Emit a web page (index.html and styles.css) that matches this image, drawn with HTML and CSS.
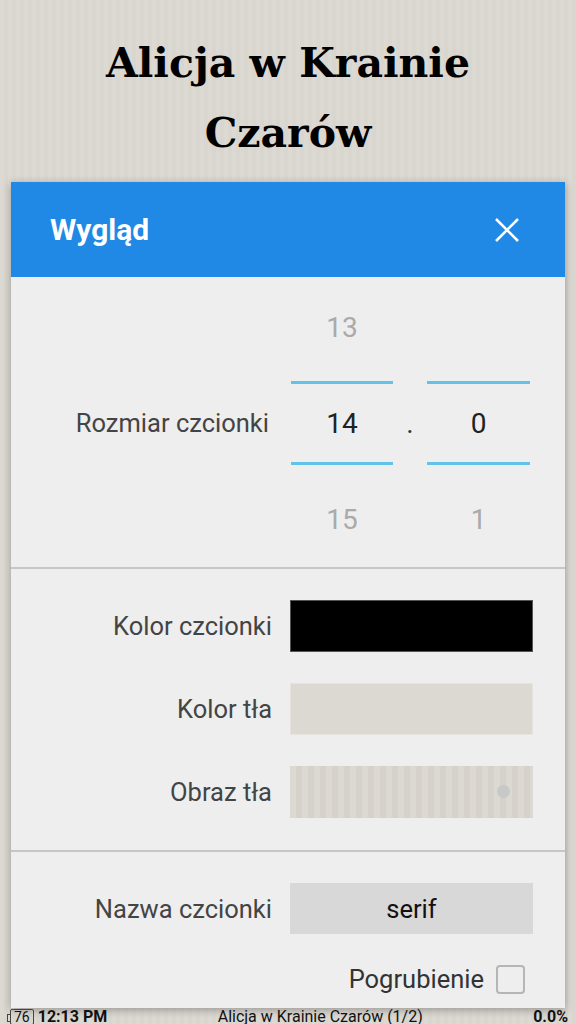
FILE: index.html
```html
<!DOCTYPE html>
<html lang="pl">
<head>
  <meta charset="UTF-8" />
  <title>Alicja w Krainie Czarów</title>
  <link rel="stylesheet" href="styles.css">
</head>
<body>

  <h1 class="book-title">Alicja w Krainie<br>Czarów</h1>

  <!-- Appearance dialog -->
  <div class="dialog">
    <div class="dialog-header">
      <span class="dialog-title">Wygląd</span>
      <button class="close-btn" aria-label="Zamknij">
        <svg width="24" height="24" viewBox="0 0 24 24">
          <path d="M1 1 L23 23 M23 1 L1 23" stroke="#fff" stroke-width="2.6" fill="none" />
        </svg>
      </button>
    </div>

    <section class="size-section">
      <div class="picker-cell dim" style="grid-area: 1 / 2">13</div>
      <div class="size-label">Rozmiar czcionki</div>
      <div class="picker-cell current">14</div>
      <div class="picker-dot">.</div>
      <div class="picker-cell current">0</div>
      <div class="picker-cell dim" style="grid-area: 3 / 2">15</div>
      <div class="picker-cell dim" style="grid-area: 3 / 4">1</div>
    </section>

    <section class="color-section">
      <div class="row">
        <label>Kolor czcionki</label>
        <div class="swatch swatch-black"></div>
      </div>
      <div class="row">
        <label>Kolor tła</label>
        <div class="swatch swatch-paper"></div>
      </div>
      <div class="row">
        <label>Obraz tła</label>
        <div class="swatch swatch-texture"><span class="texture-dot"></span></div>
      </div>
    </section>

    <section class="font-section">
      <div class="row">
        <label>Nazwa czcionki</label>
        <button class="font-btn">serif</button>
      </div>
      <div class="bold-row">
        <span>Pogrubienie</span>
        <span class="checkbox"></span>
      </div>
    </section>
  </div>

  <footer class="status-bar">
    <span class="battery">76</span>
    <span class="time">12:13 PM</span>
    <span class="chapter">Alicja w Krainie Czarów (1/2)</span>
    <span class="progress">0.0%</span>
  </footer>

</body>
</html>
```

FILE: styles.css
```css
body {
  margin: 0;
  height: 1024px;
  overflow: hidden;
  font-family: Roboto, "Noto Sans", sans-serif;
  background: #dcd8d2;
  background-image: repeating-linear-gradient(90deg, #dcd8d2 0 4px, #d9d5cf 4px 8px);
}
.book-title {
  margin: 0;
  padding-top: 28px;
  height: 182px;
  box-sizing: border-box;
  text-align: center;
  font-family: "DejaVu Serif", serif;
  font-weight: bold;
  font-size: 41px;
  line-height: 70px;
  color: #000;
}
.dialog {
  margin-left: 11px;
  width: 554px;
  background: #eeeeee;
  box-shadow: 0 2px 8px rgba(0, 0, 0, 0.3);
}
.dialog-header {
  height: 95px;
  background: #1f89e5;
  display: flex;
  align-items: center;
  justify-content: space-between;
  padding: 0 34px 0 39px;
}
.dialog-title {
  color: #fff;
  font-weight: bold;
  font-size: 30px;
}
.close-btn {
  width: 48px;
  height: 48px;
  border: 0;
  background: none;
  padding: 0;
  display: flex;
  align-items: center;
  justify-content: center;
}
.size-section {
  display: grid;
  grid-template-columns: 280px 102px 34px 103px;
  grid-template-rows: 96px 96px 96px;
  padding-top: 2px;
  border-bottom: 2px solid #c6c6c6;
}
.size-label {
  grid-area: 2 / 1;
  align-self: center;
  text-align: right;
  padding-right: 22px;
  font-size: 25.5px;
  color: #444;
}
.picker-cell {
  display: flex;
  align-items: center;
  justify-content: center;
  font-size: 28px;
}
.picker-cell.dim {
  color: #aaa;
}
.picker-cell.current {
  grid-row: 2;
  color: #222;
  margin: 6px 0;
  border-top: 3px solid #63c2e8;
  border-bottom: 3px solid #63c2e8;
}
.picker-dot {
  grid-row: 2;
  display: flex;
  align-items: center;
  justify-content: center;
  font-size: 28px;
  color: #333;
}
.color-section {
  padding: 31px 0 32px;
  border-bottom: 2px solid #c6c6c6;
  display: flex;
  flex-direction: column;
  gap: 31px;
}
.row {
  display: grid;
  grid-template-columns: 261px 243px;
  column-gap: 18px;
  align-items: center;
}
.row label {
  text-align: right;
  font-size: 25.5px;
  color: #444;
}
.swatch {
  height: 52px;
  box-sizing: border-box;
}
.swatch-black {
  background: #000;
  border: 1px solid #555;
}
.swatch-paper {
  background: #dcd8d2;
  border: 1px solid #e6e3de;
}
.swatch-texture {
  position: relative;
  background: repeating-linear-gradient(90deg, #dcd8d2 0 6px, #d6d2cb 6px 12px);
}
.texture-dot {
  position: absolute;
  right: 23px;
  top: 19px;
  width: 13px;
  height: 13px;
  border-radius: 50%;
  background: #c8c8c8;
}
.font-section {
  padding: 31px 0 14px;
}
.font-btn {
  height: 51px;
  border: 0;
  background: #d8d8d8;
  font-family: Roboto, sans-serif;
  font-size: 25.5px;
  color: #111;
}
.bold-row {
  margin-top: 30px;
  display: flex;
  align-items: center;
  justify-content: flex-end;
  gap: 12px;
  padding-right: 40px;
  font-size: 25.5px;
  color: #333;
}
.checkbox {
  width: 29px;
  height: 29px;
  box-sizing: border-box;
  border: 2px solid #b5b5b5;
  border-radius: 4px;
}
.status-bar {
  display: flex;
  align-items: center;
  height: 17px;
  padding: 0 8px 0 10px;
  font-size: 16px;
  color: #111;
}
.battery {
  position: relative;
  height: 14px;
  padding: 0 3px;
  border: 1px solid #444;
  border-radius: 2px;
  font-size: 14px;
  line-height: 14px;
  margin-right: 4px;
}
.battery::before {
  content: "";
  position: absolute;
  left: -4px;
  top: 4px;
  width: 2px;
  height: 6px;
  border: 1px solid #444;
  border-right: 0;
}
.time {
  font-weight: bold;
}
.chapter {
  flex: 1;
  text-align: center;
}
.progress {
  font-weight: bold;
}
```
